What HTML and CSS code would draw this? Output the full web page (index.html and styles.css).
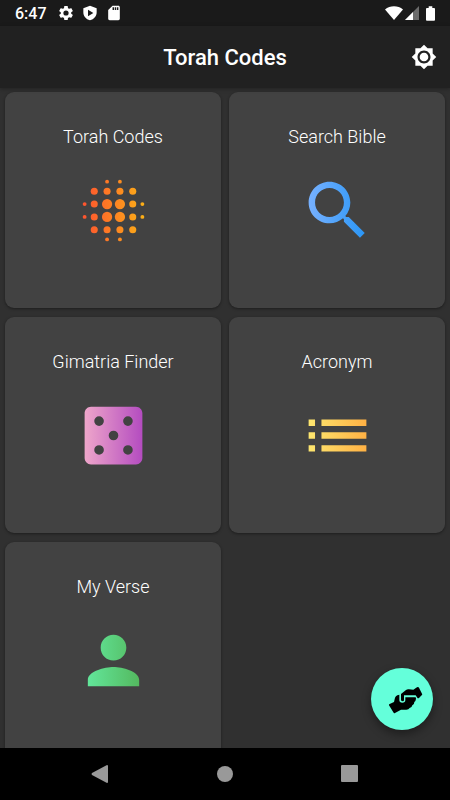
FILE: index.html
```html
<!DOCTYPE html>
<html lang="en">
<head>
<meta charset="utf-8">
<meta name="viewport" content="width=device-width, initial-scale=1">
<title>Torah Codes</title>
<link rel="stylesheet" href="styles.css">
</head>
<body>
<div class="status">
  <span class="clock">6:47</span>
  <svg class="s-icon" viewBox="1 1 22 22"><path d="M19.14 12.94c.04-.3.06-.61.06-.94 0-.32-.02-.64-.07-.94l2.03-1.58a.49.49 0 0 0 .12-.61l-1.92-3.32a.488.488 0 0 0-.59-.22l-2.39.96c-.5-.38-1.03-.7-1.62-.94l-.36-2.54a.484.484 0 0 0-.48-.41h-3.84c-.24 0-.43.17-.47.41l-.36 2.54c-.59.24-1.13.57-1.62.94l-2.39-.96c-.22-.08-.47 0-.59.22L2.74 8.87c-.12.21-.08.47.12.61l2.03 1.58c-.05.3-.09.63-.09.94s.02.64.07.94l-2.03 1.58a.49.49 0 0 0-.12.61l1.92 3.32c.12.22.37.29.59.22l2.39-.96c.5.38 1.03.7 1.62.94l.36 2.54c.05.24.24.41.48.41h3.84c.24 0 .44-.17.47-.41l.36-2.54c.59-.24 1.13-.56 1.62-.94l2.39.96c.22.08.47 0 .59-.22l1.92-3.32c.12-.22.07-.47-.12-.61l-2.01-1.58zM12 15.6A3.6 3.6 0 1 1 12 8.400a3.600 3.600 0 0 1 0 7.200z"/></svg>
  <svg class="s-icon" viewBox="0 0 24 24"><path fill-rule="evenodd" d="M12 1L2 5v6c0 5.600 4 10.700 10 12 6-1.300 10-6.400 10-12V5zM9 7L17 12l-8 5z"/></svg>
  <svg class="s-icon" viewBox="1 1 22 22"><path d="M18 2h-8L4 8v12c0 1.100.9 2 2 2h12c1.100 0 2-.9 2-2V4c0-1.100-.9-2-2-2zm-6 6h-2V4h2v4zm3 0h-2V4h2v4zm3 0h-2V4h2v4z"/></svg>
  <span class="spacer"></span>
  <svg class="wifi" viewBox="0 0 18 14"><path d="M0 3.500C5-.8 13-.8 18 3.500L9 14z"/></svg>
  <svg class="signal" viewBox="0 0 14 14"><path fill="#6b6b6b" d="M14 0v14H0z"/><path d="M8 6v8H0z"/></svg>
  <svg class="battery" viewBox="0 0 10 16"><path d="M3 0h4v2h2q1 0 1 1v12q0 1-1 1H1q-1 0-1-1V3q0-1 1-1h2z"/></svg>
</div>
<header class="appbar">
  <h1>Torah Codes</h1>
  <button class="theme" aria-label="Change theme"><svg viewBox="0 0 24 24"><path d="M20 8.690V4h-4.690L12 .69 8.690 4H4v4.690L.69 12 4 15.310V20h4.690L12 23.310 15.310 20H20v-4.690L23.310 12 20 8.690zM12 18c-3.310 0-6-2.690-6-6s2.690-6 6-6 6 2.690 6 6-2.690 6-6 6zm0-10c-2.210 0-4 1.790-4 4s1.790 4 4 4 4-1.790 4-4-1.790-4-4-4z"/></svg></button>
</header>
<main class="content">
  <div class="grid">
    <button class="card"><span class="label">Torah Codes</span>
      <svg viewBox="0 0 24 24"><defs><linearGradient id="g1" gradientUnits="userSpaceOnUse" x1="2" x2="22" y1="0" y2="0"><stop stop-color="#ff512f"/><stop offset="1" stop-color="#fbb216"/></linearGradient></defs>
      <g fill="url(#g1)"><circle cx="10" cy="3" r=".6"/><circle cx="14" cy="3" r=".6"/><circle cx="10" cy="21" r=".6"/><circle cx="14" cy="21" r=".6"/><circle cx="3" cy="10" r=".6"/><circle cx="3" cy="14" r=".6"/><circle cx="21" cy="10" r=".6"/><circle cx="21" cy="14" r=".6"/><circle cx="6" cy="6" r="1.100"/><circle cx="10" cy="6" r="1.100"/><circle cx="14" cy="6" r="1.100"/><circle cx="18" cy="6" r="1.100"/><circle cx="6" cy="10" r="1.100"/><circle cx="18" cy="10" r="1.100"/><circle cx="6" cy="14" r="1.100"/><circle cx="18" cy="14" r="1.100"/><circle cx="6" cy="18" r="1.100"/><circle cx="10" cy="18" r="1.100"/><circle cx="14" cy="18" r="1.100"/><circle cx="18" cy="18" r="1.100"/><circle cx="10" cy="10" r="1.600"/><circle cx="14" cy="10" r="1.600"/><circle cx="10" cy="14" r="1.600"/><circle cx="14" cy="14" r="1.600"/></g></svg></button>
    <button class="card"><span class="label">Search Bible</span>
      <svg viewBox="0 0 24 24"><defs><linearGradient id="g2" x1="0" x2="1" y1="0" y2="0"><stop stop-color="#77b1ff"/><stop offset="1" stop-color="#2b96f5"/></linearGradient></defs>
      <path fill="url(#g2)" d="M15.500 14h-.79l-.28-.27C15.410 12.590 16 11.110 16 9.500 16 5.910 13.090 3 9.500 3S3 5.910 3 9.500 5.910 16 9.500 16c1.610 0 3.090-.59 4.230-1.570l.27.28v.79l5 4.990L20.490 19l-4.990-5zm-6 0C7.010 14 5 11.990 5 9.500S7.010 5 9.500 5 14 7.010 14 9.500 11.990 14 9.500 14z"/></svg></button>
    <button class="card"><span class="label">Gimatria Finder</span>
      <svg viewBox="0 0 24 24"><defs><linearGradient id="g3" x1="0" x2="1" y1="0" y2="0"><stop stop-color="#eea6ca"/><stop offset="1" stop-color="#b44cc0"/></linearGradient></defs>
      <path fill="url(#g3)" d="M19 3H5c-1.100 0-2 .9-2 2v14c0 1.100.9 2 2 2h14c1.100 0 2-.9 2-2V5c0-1.100-.9-2-2-2zM7.500 18a1.500 1.500 0 1 1 0-3 1.500 1.500 0 0 1 0 3zm0-9a1.500 1.500 0 1 1 0-3 1.500 1.500 0 0 1 0 3zm4.500 4.500a1.500 1.500 0 1 1 0-3 1.500 1.500 0 0 1 0 3zm4.500 4.500a1.500 1.500 0 1 1 0-3 1.500 1.500 0 0 1 0 3zm0-9a1.500 1.500 0 1 1 0-3 1.500 1.500 0 0 1 0 3z"/></svg></button>
    <button class="card"><span class="label">Acronym</span>
      <svg viewBox="0 0 24 24"><defs><linearGradient id="g4" x1="0" x2="1" y1="0" y2="0"><stop stop-color="#fde66f"/><stop offset="1" stop-color="#ffb144"/></linearGradient></defs>
      <path fill="url(#g4)" d="M3 13h2v-2H3v2zm0 4h2v-2H3v2zm0-8h2V7H3v2zm4 4h14v-2H7v2zm0 4h14v-2H7v2zM7 7v2h14V7H7z"/></svg></button>
    <button class="card"><span class="label">My Verse</span>
      <svg viewBox="0 0 24 24"><defs><linearGradient id="g5" gradientUnits="userSpaceOnUse" x1="4" x2="20" y1="0" y2="0"><stop stop-color="#62e69a"/><stop offset="1" stop-color="#54b95f"/></linearGradient></defs>
      <path fill="url(#g5)" d="M12 12c2.210 0 4-1.790 4-4s-1.790-4-4-4-4 1.790-4 4 1.790 4 4 4zm0 2c-2.670 0-8 1.340-8 4v2h16v-2c0-2.660-5.330-4-8-4z"/></svg></button>
  </div>
  <button class="fab" aria-label="Support"><svg viewBox="32 39 186 186"><path d="M88 147l13-6 3-13q2-5 7-7l6-2v16q0 8 9 8t9-8v-8h29q4 0 3 4-1 8-5 10 0 8-6 10-1 7-8 8-3 5-10 5h-16l-18 10q-3 2-5-2l-13-21q-1-3 2-4z"/><path d="M122 117l15-12q4-3 9-2l13 1 11-7q4-2 6 1l9 18q2 3-1 5l-8 8q-3 2-5-1l-5-7h-35v14q0 4-4 4t-5-4z"/></svg></button>
</main>
<nav class="navbar">
  <button aria-label="Back"><svg viewBox="0 0 18 18"><path d="M16 0q1 0 1 1v16q0 1-1 1L1 10q-1-1 0-2z"/></svg></button>
  <button aria-label="Home"><svg viewBox="0 0 18 18"><circle cx="9" cy="9" r="8"/></svg></button>
  <button aria-label="Recent apps"><svg viewBox="0 0 18 18"><rect x="1" width="17" height="17" rx="1"/></svg></button>
</nav>
</body>
</html>
```
FILE: styles.css
```css
* { box-sizing: border-box; }
body {
  margin: 0;
  height: 100vh;
  display: flex;
  flex-direction: column;
  background: #303030;
  color: #fff;
  font-family: Roboto, sans-serif;
}
button {
  border: 0;
  padding: 0;
  background: none;
  color: inherit;
  font: inherit;
}
svg { display: block; fill: #fff; }
.status {
  flex: none;
  display: flex;
  align-items: center;
  height: 26px;
  padding: 0 15px;
  background: #1a1a1a;
}
.clock {
  margin-right: 11px;
  font-size: 16px;
  font-weight: 500;
}
.s-icon { width: 16px; height: 16px; margin-right: 8px; }
.spacer { flex: 1; }
.wifi { width: 18px; height: 14px; margin-right: 2px; }
.signal { width: 14px; height: 14px; margin-right: 7px; }
.battery { width: 9px; height: 15px; }
.appbar {
  flex: none;
  position: relative;
  z-index: 1;
  display: grid;
  grid-template-columns: 1fr auto 1fr;
  align-items: center;
  height: 62px;
  padding: 0 13px;
  background: #212121;
  box-shadow: 0 1px 4px rgba(0, 0, 0, 0.3);
}
h1 {
  grid-column: 2;
  margin: 0;
  font-size: 22px;
  font-weight: 500;
}
.theme { justify-self: end; }
.theme svg { width: 26px; height: 26px; }
.content {
  flex: 1;
  min-height: 0;
  position: relative;
  overflow: hidden;
}
.grid {
  display: grid;
  grid-template-columns: 1fr 1fr;
  gap: 9px 8px;
  padding: 4px 5px;
}
.card {
  aspect-ratio: 1;
  display: flex;
  flex-direction: column;
  align-items: center;
  gap: 23px;
  padding-top: 33px;
  border-radius: 9px;
  background: #424242;
  box-shadow: 0 1px 3px rgba(0, 0, 0, 0.4);
}
.card svg { width: 77px; height: 77px; }
.label {
  font-size: 18px;
  font-weight: 300;
  line-height: 24px;
}
.fab {
  position: absolute;
  right: 17px;
  bottom: 18px;
  width: 62px;
  height: 62px;
  border-radius: 50%;
  background: #64ffda;
  box-shadow: 0 4px 10px rgba(0, 0, 0, 0.4);
}
.fab svg { width: 100%; height: 100%; fill: #000; }
.navbar {
  flex: none;
  display: flex;
  align-items: center;
  justify-content: space-between;
  height: 52px;
  padding: 0 92px 0 91px;
  background: #000;
}
.navbar svg { width: 18px; height: 18px; fill: #999; }
```
